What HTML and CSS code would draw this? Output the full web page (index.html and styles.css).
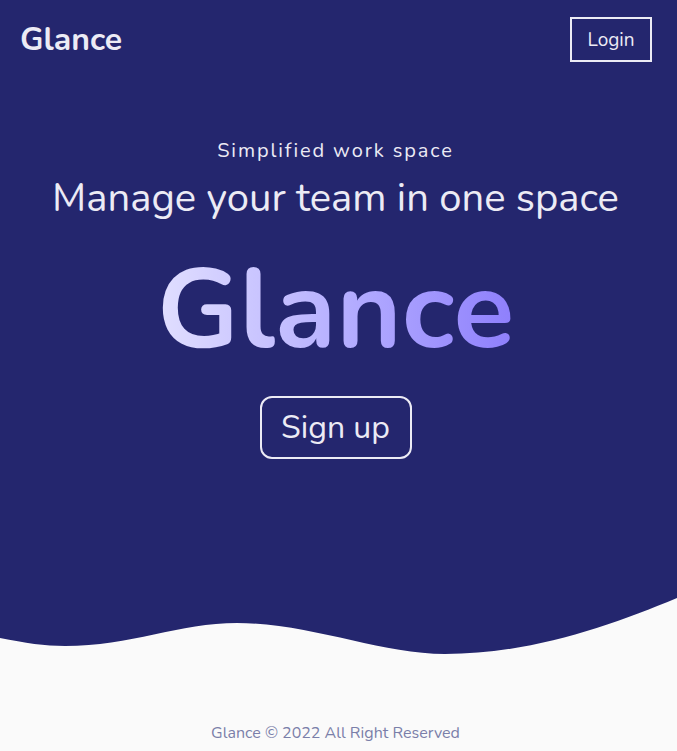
FILE: index.html
```html
<!DOCTYPE html>
<html lang="en">
<head>
<meta charset="utf-8">
<title>Glance</title>
<link rel="stylesheet" href="styles.css">
</head>
<body>
<section class="hero">
  <header class="nav">
    <div class="logo">Glance</div>
    <button class="login">Login</button>
  </header>
  <div class="hero-content">
    <p class="eyebrow">Simplified work space</p>
    <h2 class="tagline">Manage your team in one space</h2>
    <h1 class="brand">Glance</h1>
    <button class="signup">Sign up</button>
  </div>
</section>
<svg class="wave" viewBox="0 0 677 56" preserveAspectRatio="none" aria-hidden="true">
  <path d="M0,40 C25,45 45,48 65,48 C130,48 180,25 237,25 C310,25 380,56 445,56 C530,56 610,28 677,0 L0,0 Z" fill="#24266e"/>
</svg>
<footer class="footer">Glance © 2022 All Right Reserved</footer>
</body>
</html>
```
FILE: styles.css
```css
* { box-sizing: border-box; }
html, body { margin: 0; padding: 0; }
body {
  background: #fafafa;
  font-family: "Nunito", "Noto Sans", "Open Sans", sans-serif;
  width: 677px;
  height: 751px;
  overflow: hidden;
}
.hero {
  background: #24266e;
  height: 598px;
  display: flex;
  flex-direction: column;
}
.nav {
  display: flex;
  justify-content: space-between;
  align-items: center;
  padding: 17px 25px 0 20px;
}
.logo {
  color: #ecebf5;
  font-weight: 700;
  font-size: 32px;
}
.login {
  background: transparent;
  border: 2px solid #ecebf5;
  color: #ecebf5;
  font-family: inherit;
  font-size: 19px;
  width: 82px;
  height: 45px;
  padding: 0;
}
.hero-content {
  display: flex;
  flex-direction: column;
  align-items: center;
  text-align: center;
  color: #ecebf5;
  padding-right: 6px;
}
.eyebrow {
  margin: 74px 0 0;
  font-size: 20px;
  letter-spacing: 1.9px;
  line-height: 30px;
}
.tagline {
  margin: 7px 0 0;
  font-size: 40px;
  font-weight: 400;
  line-height: 50px;
}
.brand {
  margin: 26px 0 0;
  font-size: 112px;
  font-weight: 700;
  line-height: 124px;
  background: linear-gradient(90deg, #e1dfff 0%, #b3acff 55%, #8e7ffc 100%);
  -webkit-background-clip: text;
  background-clip: text;
  color: transparent;
}
.signup {
  margin-top: 23px;
  background: transparent;
  border: 2px solid #ecebf5;
  border-radius: 12px;
  color: #ecebf5;
  font-family: inherit;
  font-size: 32px;
  width: 152px;
  height: 63px;
  padding: 0;
}
.wave {
  display: block;
  width: 677px;
  height: 56px;
}
.footer {
  text-align: center;
  color: #7a7fa9;
  font-size: 16px;
  margin-top: 68px;
  padding-right: 6px;
}
```
